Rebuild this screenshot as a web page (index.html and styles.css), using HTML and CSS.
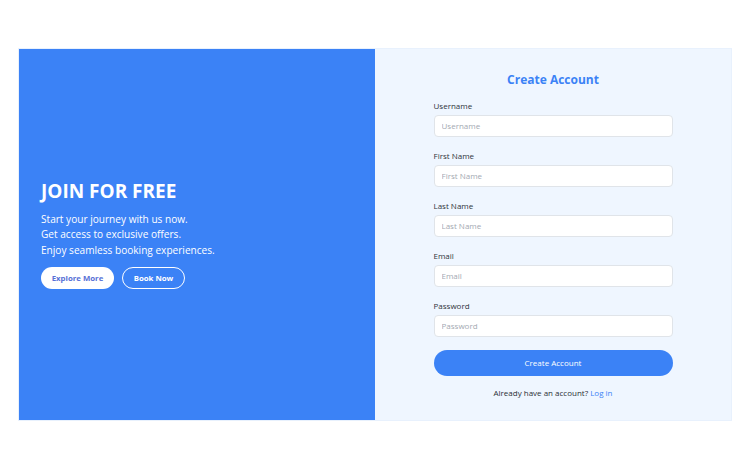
FILE: index.html
```html
<!DOCTYPE html>
<html lang="en">
<head>
<meta charset="utf-8">
<title>Create Account</title>
<link rel="stylesheet" href="styles.css">
</head>
<body>
<main class="card">
  <section class="promo">
    <h1 class="promo-title">JOIN FOR FREE</h1>
    <p class="promo-text">Start your journey with us now.<br>Get access to exclusive offers.<br>Enjoy seamless booking experiences.</p>
    <div class="promo-actions">
      <a class="btn btn-light" href="#">Explore More</a>
      <a class="btn btn-outline" href="#">Book Now</a>
    </div>
  </section>
  <section class="signup">
    <form class="form">
      <h2 class="form-title">Create Account</h2>
      <div class="field">
        <label class="label" for="username">Username</label>
        <input class="input" id="username" type="text" placeholder="Username">
      </div>
      <div class="field">
        <label class="label" for="first">First Name</label>
        <input class="input" id="first" type="text" placeholder="First Name">
      </div>
      <div class="field">
        <label class="label" for="last">Last Name</label>
        <input class="input" id="last" type="text" placeholder="Last Name">
      </div>
      <div class="field">
        <label class="label" for="email">Email</label>
        <input class="input" id="email" type="email" placeholder="Email">
      </div>
      <div class="field">
        <label class="label" for="password">Password</label>
        <input class="input" id="password" type="password" placeholder="Password">
      </div>
      <button class="submit" type="button">Create Account</button>
      <p class="login">Already have an account? <a class="login-link" href="#">Log in</a></p>
    </form>
  </section>
</main>
</body>
</html>
```

FILE: styles.css
```css
html, body {
  margin: 0;
  padding: 0;
}
body {
  width: 750px;
  height: 469px;
  display: flex;
  align-items: center;
  justify-content: center;
  background: #ffffff;
  font-family: "Open Sans", "Noto Sans", sans-serif;
}
.card {
  width: 712px;
  height: 371px;
  border: 1px solid #e8f1fd;
  display: grid;
  grid-template-columns: 356px 356px;
}
.promo {
  background: #3b82f6;
  padding: 0 22px;
  display: flex;
  flex-direction: column;
  justify-content: center;
  color: #ffffff;
}
.promo-title {
  margin: 0;
  font-size: 19px;
  line-height: 22px;
  font-weight: 700;
}
.promo-text {
  margin: 10px 0 0;
  font-size: 10.1px;
  line-height: 15.5px;
}
.promo-actions {
  margin-top: 9px;
  display: flex;
  gap: 8px;
}
.btn {
  height: 22px;
  box-sizing: border-box;
  display: inline-flex;
  align-items: center;
  justify-content: center;
  border-radius: 11px;
  font-size: 7.8px;
  font-weight: 700;
  text-decoration: none;
}
.btn-light {
  width: 73px;
  background: #ffffff;
  color: #5871d6;
}
.btn-outline {
  width: 63px;
  border: 1px solid #ffffff;
  color: #ffffff;
}
.signup {
  background: #eff6ff;
  display: flex;
  align-items: center;
  justify-content: center;
}
.form {
  width: 239px;
  display: flex;
  flex-direction: column;
}
.form-title {
  margin: 0 0 11px;
  text-align: center;
  font-size: 12px;
  line-height: 18px;
  font-weight: 700;
  color: #3b82f6;
}
.field {
  display: flex;
  flex-direction: column;
  margin-bottom: 13px;
}
.field:last-of-type {
  margin-bottom: 0;
}
.label {
  font-size: 8px;
  line-height: 12px;
  color: #2f343b;
  margin-bottom: 3px;
}
.input {
  height: 22px;
  box-sizing: border-box;
  border: 1px solid #e0e4e9;
  border-radius: 4px;
  background: #ffffff;
  padding: 0 7px;
  font-family: inherit;
  font-size: 8px;
  color: #333a44;
  outline: none;
}
.input::placeholder {
  color: #a3a9b2;
}
.submit {
  margin-top: 13px;
  height: 26px;
  border: 0;
  border-radius: 13px;
  background: #3b82f6;
  color: #ffffff;
  font-family: inherit;
  font-size: 8px;
}
.login {
  margin: 11px 0 0;
  text-align: center;
  font-size: 8px;
  line-height: 12px;
  color: #2b2f36;
}
.login-link {
  color: #3b82f6;
  text-decoration: none;
}
```
